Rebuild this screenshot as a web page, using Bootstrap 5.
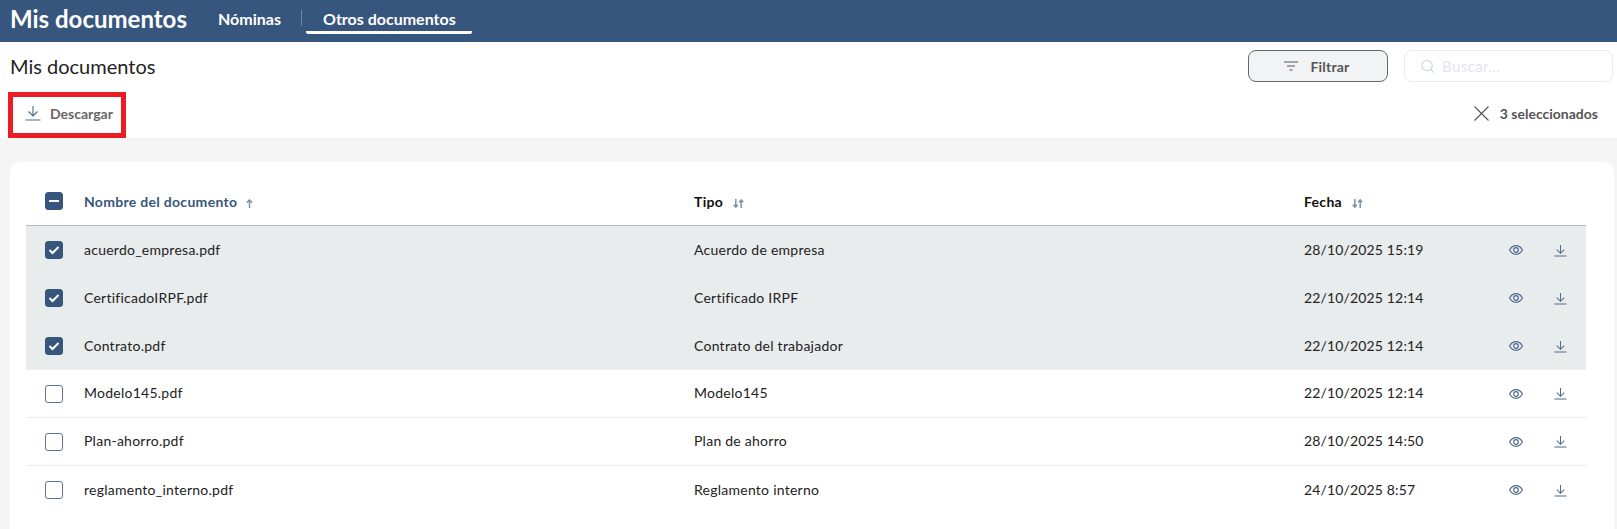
<!DOCTYPE html>
<html lang="es">
<head>
<meta charset="utf-8">
<title>Mis documentos</title>
<link href="https://cdn.jsdelivr.net/npm/bootstrap@5.3.0/dist/css/bootstrap.min.css" rel="stylesheet">
<style>
html,body{height:100%;overflow:hidden}
body{font-family:Lato,"Liberation Sans",sans-serif;background:#fff;color:#222}
.top-bar{height:42px;background:#37567d;color:#fff;padding-left:10px}
.app-title{font-size:24px;font-weight:700;line-height:38px;width:208px}
.tab-link{font-size:16px;font-weight:700;color:#fff;text-decoration:none;line-height:38px}
.tab-one{width:83px}
.tab-sep{width:1px;height:16px;background:#6f88a6;margin-top:10px}
.tab-two{width:166px;margin-left:4px;padding-left:17px;height:34px;border-bottom:3px solid #fff;border-radius:0 0 2px 2px}
.head-row{height:50px;padding:8px 4px 0 10px}
.page-title{font-size:20px;font-weight:400;margin:0;line-height:32px;color:#222}
.filter-btn{width:140px;height:32px;background:#f2f3f5;border:1px solid #666;border-radius:8px;font-size:14px;font-weight:700;color:#555;padding:0 2px 0 0;margin-right:16px;letter-spacing:.2px}
.search-box{width:209px;height:32px;border:1px solid #e8eaed;border-radius:8px;padding-left:16px;font-size:15px;color:#e3e6ea;letter-spacing:.4px;column-gap:7px}
.action-row{height:46px;padding-right:19px}
.dl-outline{width:118px;height:46px;border:5px solid #ed1c24;margin-left:8px;padding:0 0 4px 12px;font-size:14px;font-weight:700;color:#666;column-gap:9px}
.sel-info{font-size:14px;font-weight:700;color:#555;padding-bottom:3px;column-gap:11px}
.gray-zone{background:#f5f5f5;height:391px;padding:24px 3px 0 10px}
.doc-panel{background:#fff;border-radius:10px 10px 0 0;height:100%;padding:0 28px 0 16px}
.doc-head,.doc-row{display:grid;grid-template-columns:58px 610px 610px 1fr;align-items:center}
.doc-head{height:64px;border-bottom:1px solid #b4b7ba;font-size:14px;font-weight:700;color:#111;padding-top:16px;letter-spacing:.3px}
.doc-head .cur{color:#37567d}
.doc-head .tick{margin-top:-2px}
.doc-row{height:48px;font-size:14px;color:#222;border-bottom:1px solid #ececec;letter-spacing:.25px}
.doc-row.picked{background:#e9eced;border-bottom:0}
.doc-row:last-child{border-bottom:0}
.txt-cell{padding-bottom:2px}
.date-txt{letter-spacing:.15px;padding-bottom:2px}
.tick{width:18px;height:18px;border-radius:3px;border:1.5px solid #5d7799;margin-left:19px;display:flex;align-items:center;justify-content:center;background:#fff}
.tick.on{background:#37567d;border-color:#37567d}
.row-tools{display:flex;align-items:center;justify-content:flex-end;padding-right:19px;gap:31px}
.ic{display:block;flex:none}
.sort-ic{margin-left:9px;vertical-align:-1px}
</style>
</head>
<body>
<header class="top-bar d-flex align-items-start">
  <div class="app-title">Mis documentos</div>
  <a class="tab-link tab-one" href="#">Nóminas</a>
  <span class="tab-sep"></span>
  <a class="tab-link tab-two" href="#">Otros documentos</a>
</header>

<div class="head-row d-flex align-items-start">
  <h1 class="page-title me-auto">Mis documentos</h1>
  <button class="filter-btn d-flex align-items-center justify-content-center gap-2" type="button">
    <svg class="ic" width="14" height="10" viewBox="0 0 14 10" fill="none" stroke="#555" stroke-width="1"><path d="M0 1h14M3 5h8M5.500 9h3"/></svg>
    <span class="ms-1">Filtrar</span>
  </button>
  <div class="search-box d-flex align-items-center">
    <svg class="ic" width="14" height="15" viewBox="0 0 15 15" fill="none" stroke="#c9d2dd" stroke-width="1.100"><circle cx="6.500" cy="6.500" r="5.500"/><path d="M10.500 10.500 14 14"/></svg>
    <span>Buscar...</span>
  </div>
</div>

<div class="action-row d-flex align-items-start justify-content-between">
  <div class="dl-outline d-flex align-items-center">
    <svg class="ic" width="16" height="16" viewBox="0 0 16 16" fill="none" stroke="#4d6a8f" stroke-width="1.100"><path d="M8 1v10M3.500 6.500 8 11l4.500-4.500M.5 15h15"/></svg>
    <span>Descargar</span>
  </div>
  <div class="sel-info d-flex align-items-center align-self-center">
    <svg class="ic" width="15" height="15" viewBox="0 0 15 15" fill="none" stroke="#555" stroke-width="1.100"><path d="M.5.500l14 14M14.500.500l-14 14"/></svg>
    <span>3 seleccionados</span>
  </div>
</div>

<main class="gray-zone">
  <section class="doc-panel">
    <div class="doc-head">
      <div><span class="tick on"><svg width="10" height="2" viewBox="0 0 10 2"><path d="M0 1h10" stroke="#fff" stroke-width="2"/></svg></span></div>
      <div class="cur">Nombre del documento<svg class="sort-ic" width="7" height="9" viewBox="0 0 8 10" fill="none" stroke="#7d92ad" stroke-width="1.700"><path d="M4 10V1M1 4l3-3 3 3"/></svg></div>
      <div>Tipo<svg class="sort-ic" width="13" height="9" viewBox="0 0 12 10" fill="none" stroke="#7d92ad" stroke-width="1.700"><path d="M3 0v9M.7 6.500 3 9l2.300-2.500M9 10V1M6.700 3.500 9 1l2.300 2.500"/></svg></div>
      <div>Fecha<svg class="sort-ic" width="13" height="9" viewBox="0 0 12 10" fill="none" stroke="#7d92ad" stroke-width="1.700"><path d="M3 0v9M.7 6.500 3 9l2.300-2.500M9 10V1M6.700 3.500 9 1l2.300 2.500"/></svg></div>
    </div>

    <div class="doc-row picked">
      <div><span class="tick on"><svg width="12" height="10" viewBox="0 0 12 10" fill="none" stroke="#fff" stroke-width="2"><path d="M1.500 5 4.500 8l6-6"/></svg></span></div>
      <div class="txt-cell">acuerdo_empresa.pdf</div><div class="txt-cell">Acuerdo de empresa</div>
      <div class="d-flex align-items-center justify-content-between"><span class="date-txt">28/10/2025 15:19</span><span class="row-tools"><svg class="ic" width="14" height="10" viewBox="0 0 14 10" fill="none" stroke="#4d6a8f" stroke-width="1.200"><path d="M.6 5C2.300 2 4.500.7 7 .7S11.700 2 13.400 5C11.700 8 9.500 9.300 7 9.300S2.300 8 .6 5Z"/><circle cx="7" cy="5" r="2.300"/></svg><svg class="ic" width="13" height="13" viewBox="0 0 14 14" fill="none" stroke="#4d6a8f" stroke-width="1.100"><path d="M7 1v9M3 6l4 4 4-4M.5 13h13"/></svg></span></div>
    </div>
    <div class="doc-row picked">
      <div><span class="tick on"><svg width="12" height="10" viewBox="0 0 12 10" fill="none" stroke="#fff" stroke-width="2"><path d="M1.500 5 4.500 8l6-6"/></svg></span></div>
      <div class="txt-cell">CertificadoIRPF.pdf</div><div class="txt-cell">Certificado IRPF</div>
      <div class="d-flex align-items-center justify-content-between"><span class="date-txt">22/10/2025 12:14</span><span class="row-tools"><svg class="ic" width="14" height="10" viewBox="0 0 14 10" fill="none" stroke="#4d6a8f" stroke-width="1.200"><path d="M.6 5C2.300 2 4.500.7 7 .7S11.700 2 13.400 5C11.700 8 9.500 9.300 7 9.300S2.300 8 .6 5Z"/><circle cx="7" cy="5" r="2.300"/></svg><svg class="ic" width="13" height="13" viewBox="0 0 14 14" fill="none" stroke="#4d6a8f" stroke-width="1.100"><path d="M7 1v9M3 6l4 4 4-4M.5 13h13"/></svg></span></div>
    </div>
    <div class="doc-row picked">
      <div><span class="tick on"><svg width="12" height="10" viewBox="0 0 12 10" fill="none" stroke="#fff" stroke-width="2"><path d="M1.500 5 4.500 8l6-6"/></svg></span></div>
      <div class="txt-cell">Contrato.pdf</div><div class="txt-cell">Contrato del trabajador</div>
      <div class="d-flex align-items-center justify-content-between"><span class="date-txt">22/10/2025 12:14</span><span class="row-tools"><svg class="ic" width="14" height="10" viewBox="0 0 14 10" fill="none" stroke="#4d6a8f" stroke-width="1.200"><path d="M.6 5C2.300 2 4.500.7 7 .7S11.700 2 13.400 5C11.700 8 9.500 9.300 7 9.300S2.300 8 .6 5Z"/><circle cx="7" cy="5" r="2.300"/></svg><svg class="ic" width="13" height="13" viewBox="0 0 14 14" fill="none" stroke="#4d6a8f" stroke-width="1.100"><path d="M7 1v9M3 6l4 4 4-4M.5 13h13"/></svg></span></div>
    </div>
    <div class="doc-row">
      <div><span class="tick"></span></div>
      <div class="txt-cell">Modelo145.pdf</div><div class="txt-cell">Modelo145</div>
      <div class="d-flex align-items-center justify-content-between"><span class="date-txt">22/10/2025 12:14</span><span class="row-tools"><svg class="ic" width="14" height="10" viewBox="0 0 14 10" fill="none" stroke="#4d6a8f" stroke-width="1.200"><path d="M.6 5C2.300 2 4.500.7 7 .7S11.700 2 13.400 5C11.700 8 9.500 9.300 7 9.300S2.300 8 .6 5Z"/><circle cx="7" cy="5" r="2.300"/></svg><svg class="ic" width="13" height="13" viewBox="0 0 14 14" fill="none" stroke="#4d6a8f" stroke-width="1.100"><path d="M7 1v9M3 6l4 4 4-4M.5 13h13"/></svg></span></div>
    </div>
    <div class="doc-row">
      <div><span class="tick"></span></div>
      <div class="txt-cell">Plan-ahorro.pdf</div><div class="txt-cell">Plan de ahorro</div>
      <div class="d-flex align-items-center justify-content-between"><span class="date-txt">28/10/2025 14:50</span><span class="row-tools"><svg class="ic" width="14" height="10" viewBox="0 0 14 10" fill="none" stroke="#4d6a8f" stroke-width="1.200"><path d="M.6 5C2.300 2 4.500.7 7 .7S11.700 2 13.400 5C11.700 8 9.500 9.300 7 9.300S2.300 8 .6 5Z"/><circle cx="7" cy="5" r="2.300"/></svg><svg class="ic" width="13" height="13" viewBox="0 0 14 14" fill="none" stroke="#4d6a8f" stroke-width="1.100"><path d="M7 1v9M3 6l4 4 4-4M.5 13h13"/></svg></span></div>
    </div>
    <div class="doc-row">
      <div><span class="tick"></span></div>
      <div class="txt-cell">reglamento_interno.pdf</div><div class="txt-cell">Reglamento interno</div>
      <div class="d-flex align-items-center justify-content-between"><span class="date-txt">24/10/2025 8:57</span><span class="row-tools"><svg class="ic" width="14" height="10" viewBox="0 0 14 10" fill="none" stroke="#4d6a8f" stroke-width="1.200"><path d="M.6 5C2.300 2 4.500.7 7 .7S11.700 2 13.400 5C11.700 8 9.500 9.300 7 9.300S2.300 8 .6 5Z"/><circle cx="7" cy="5" r="2.300"/></svg><svg class="ic" width="13" height="13" viewBox="0 0 14 14" fill="none" stroke="#4d6a8f" stroke-width="1.100"><path d="M7 1v9M3 6l4 4 4-4M.5 13h13"/></svg></span></div>
    </div>
  </section>
</main>
<script src="https://cdn.jsdelivr.net/npm/bootstrap@5.3.0/dist/js/bootstrap.bundle.min.js"></script>
</body>
</html>
